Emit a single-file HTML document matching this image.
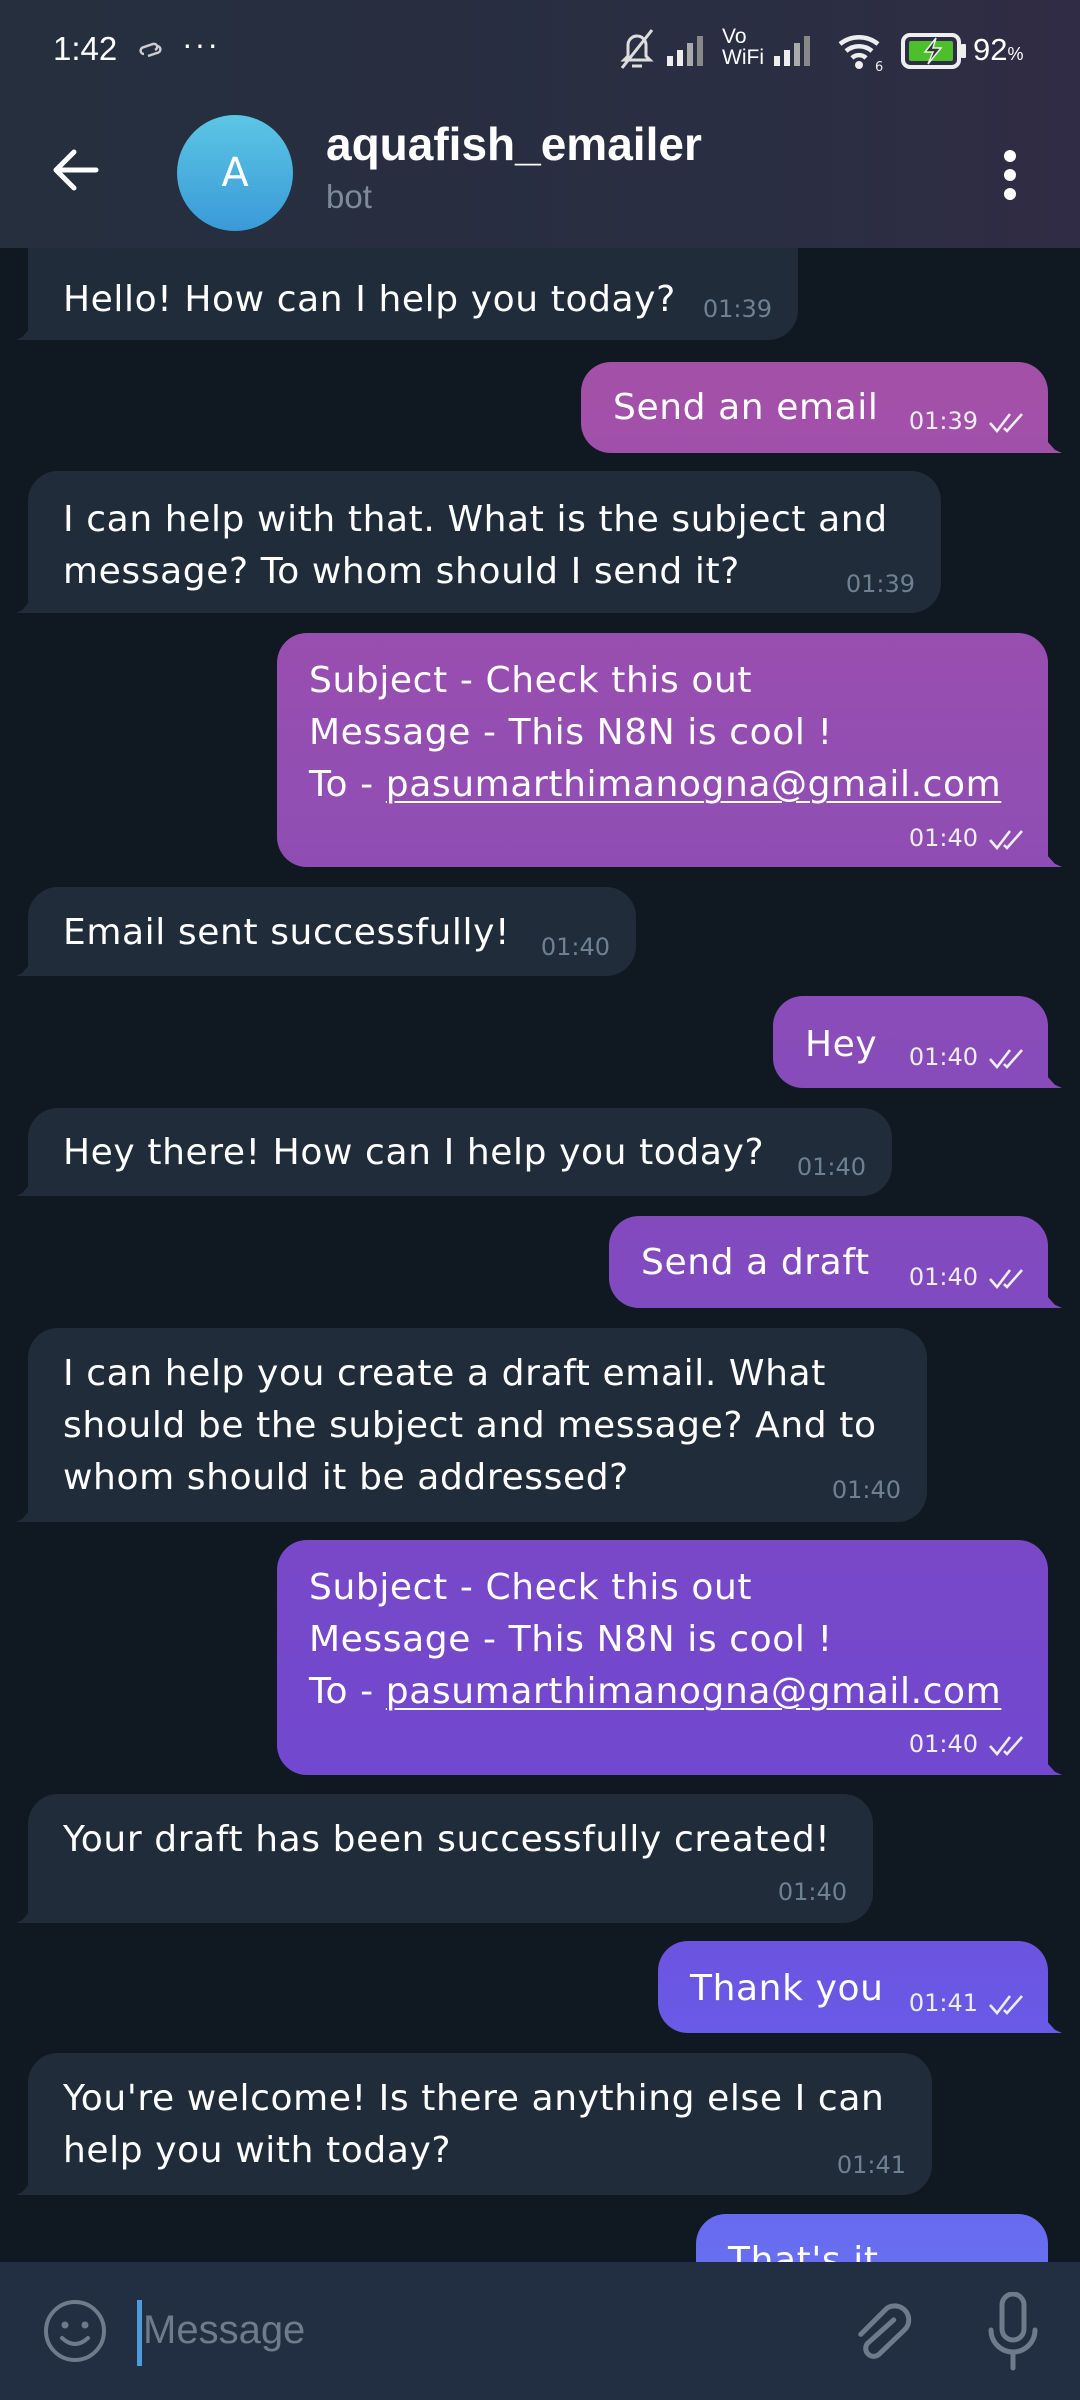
<!DOCTYPE html>
<html><head><meta charset="utf-8"><style>
*{margin:0;padding:0;box-sizing:border-box}
body{width:1080px;height:2400px;overflow:hidden;background:#101922;font-family:"DejaVu Sans","Liberation Sans",sans-serif;position:relative;color:#fff}
.hdr{position:absolute;left:0;top:0;width:1080px;height:248px;background:linear-gradient(90deg,#252f3e,#2a2e42 70%,#302c45);z-index:2}
.b{position:absolute;border-radius:30px}
.in{background:#212c3a;border-bottom-left-radius:8px}
.in::after{content:"";position:absolute;left:-12px;bottom:0;width:22px;height:22px;background:#212c3a;clip-path:polygon(100% 0,100% 100%,0 100%,30% 85%)}
.out{background:linear-gradient(180deg,#a651a8 0px,#a350a9 400px,#8d4db5 900px,#7a48c6 1500px,#7048d0 1800px,#685cea 2050px,#6872f2 2300px);background-attachment:fixed;border-bottom-right-radius:8px}
.out::after{content:"";position:absolute;right:-14px;bottom:0;width:24px;height:22px;background:inherit;background-attachment:fixed;clip-path:polygon(0 0,0 100%,100% 100%,70% 85%)}
.t{position:absolute;font-size:36px;line-height:52px;white-space:nowrap;letter-spacing:0.6px;margin-top:3px}
.ts{position:absolute;font-size:24px;line-height:30px;white-space:nowrap}
.in .ts{color:#6e8193}
.out .ts{color:#eee}
.ck{display:inline-block;margin-left:10px;vertical-align:middle}
u{text-decoration:underline;text-decoration-thickness:2px;text-underline-offset:5px}
.bar{position:absolute;left:0;top:2262px;width:1080px;height:138px;background:#222e41}
.sb{position:absolute;font-family:"Liberation Sans",sans-serif}
</style></head><body>

<div class="hdr">
 <div class="sb" style="left:53px;top:30px;font-size:33px">1:42</div>
 <svg style="position:absolute;left:136px;top:38px" width="30" height="24" viewBox="0 0 30 24"><path d="M8 16c-4 0-5-6 0-7l9-3c4-1 6 4 2 6M21 8c4 0 5 6 0 7l-9 3" fill="none" stroke="#ccc" stroke-width="2.5"/></svg>
 <div class="sb" style="left:182px;top:26px;font-size:32px;letter-spacing:2px">···</div>
 <svg style="position:absolute;left:616px;top:26px" width="40" height="46" viewBox="0 0 40 46"><path d="M8 34 l4-4 v-11 a9 9 0 0 1 18 0 v11 l4 4 z M16 40h10 M6 42 L36 4" fill="none" stroke="#ddd" stroke-width="3"/></svg>
 <svg style="position:absolute;left:667px;top:34px" width="48" height="34" viewBox="0 0 48 34"><rect x="0" y="22" width="6" height="10" fill="#eee"/><rect x="10" y="16" width="6" height="16" fill="#eee"/><rect x="20" y="9" width="6" height="23" fill="#aaa"/><rect x="30" y="2" width="6" height="30" fill="#888"/></svg>
 <div class="sb" style="left:722px;top:26px;font-size:21px;line-height:21px">Vo<br>WiFi</div>
 <svg style="position:absolute;left:774px;top:34px" width="48" height="34" viewBox="0 0 48 34"><rect x="0" y="22" width="6" height="10" fill="#eee"/><rect x="10" y="16" width="6" height="16" fill="#eee"/><rect x="20" y="9" width="6" height="23" fill="#aaa"/><rect x="30" y="2" width="6" height="30" fill="#888"/></svg>
 <svg style="position:absolute;left:835px;top:30px" width="50" height="42" viewBox="0 0 50 42"><path d="M43 14a30 30 0 0 0-38 0M37 21a20 20 0 0 0-26 0M31 28a10 10 0 0 0-14 0" fill="none" stroke="#eee" stroke-width="4.5"/><circle cx="24" cy="35" r="4" fill="#eee"/><text x="40" y="41" font-size="13" fill="#eee">6</text></svg>
 <svg style="position:absolute;left:900px;top:32px" width="70" height="38" viewBox="0 0 70 38"><rect x="3" y="3" width="56" height="32" rx="7" fill="none" stroke="#eee" stroke-width="4"/><rect x="9" y="9" width="44" height="20" rx="2" fill="#4cc02a"/><rect x="61" y="12" width="5" height="14" rx="1" fill="#eee"/><path d="M36 6 l-11 14 h8 l-5 12 l13-16 h-8z" fill="#2a3a2a" stroke="#eee" stroke-width="1.5"/></svg>
 <div class="sb" style="left:973px;top:32px;font-size:31px">92<span style="font-size:18px">%</span></div>
 <svg style="position:absolute;left:50px;top:148px" width="50" height="44" viewBox="0 0 50 44"><path d="M46 22H6M24 4L6 22l18 18" fill="none" stroke="#fff" stroke-width="5" stroke-linecap="round" stroke-linejoin="round"/></svg>
 <div style="position:absolute;left:177px;top:115px;width:116px;height:116px;border-radius:50%;background:linear-gradient(180deg,#5bc6e4,#3a9ad8);text-align:center;line-height:116px;font-size:40px">A</div>
 <div class="sb" style="left:326px;top:117px;font-size:46px;font-weight:bold">aquafish_emailer</div>
 <div class="sb" style="left:326px;top:178px;font-size:33px;color:#7d8b99">bot</div>
 <div style="position:absolute;left:1004px;top:150px;width:12px;height:12px;border-radius:50%;background:#fff;box-shadow:0 19px 0 #fff,0 38px 0 #fff"></div>
</div>

<div class="b in" style="left:28px;top:232px;width:770px;height:108px;border-top-left-radius:0;border-top-right-radius:0"><div class="t" style="left:35px;top:39px">Hello! How can I help you today?</div><div class="ts" style="right:26px;top:62px">01:39</div></div>

<div class="b out" style="left:581px;top:362px;width:467px;height:91px"><div class="t" style="left:32px;top:17px">Send an email</div><div class="ts" style="right:20px;top:44px">01:39<svg class="ck" width="40" height="22" viewBox="0 0 40 22"><path d="M2 12l7 8L22 3M16 17l3 3L34 3" fill="none" stroke="#eee" stroke-width="2.6"/></svg></div></div>

<div class="b in" style="left:28px;top:471px;width:913px;height:142px"><div class="t" style="left:35px;top:20px">I can help with that. What is the subject and</div><div class="t" style="left:35px;top:72px">message? To whom should I send it?</div><div class="ts" style="right:26px;top:98px">01:39</div></div>

<div class="b out" style="left:277px;top:633px;width:771px;height:234px"><div class="t" style="left:32px;top:19px">Subject - Check this out</div><div class="t" style="left:32px;top:71px">Message - This N8N is cool !</div><div class="t" style="left:32px;top:123px">To - <u>pasumarthimanogna@gmail.com</u></div><div class="ts" style="right:20px;top:190px">01:40<svg class="ck" width="40" height="22" viewBox="0 0 40 22"><path d="M2 12l7 8L22 3M16 17l3 3L34 3" fill="none" stroke="#eee" stroke-width="2.6"/></svg></div></div>

<div class="b in" style="left:28px;top:887px;width:608px;height:89px"><div class="t" style="left:35px;top:17px">Email sent successfully!</div><div class="ts" style="right:26px;top:45px">01:40</div></div>

<div class="b out" style="left:773px;top:996px;width:275px;height:92px"><div class="t" style="left:32px;top:20px">Hey</div><div class="ts" style="right:20px;top:46px">01:40<svg class="ck" width="40" height="22" viewBox="0 0 40 22"><path d="M2 12l7 8L22 3M16 17l3 3L34 3" fill="none" stroke="#eee" stroke-width="2.6"/></svg></div></div>

<div class="b in" style="left:28px;top:1108px;width:864px;height:88px"><div class="t" style="left:35px;top:16px">Hey there! How can I help you today?</div><div class="ts" style="right:26px;top:44px">01:40</div></div>

<div class="b out" style="left:609px;top:1216px;width:439px;height:92px"><div class="t" style="left:32px;top:18px">Send a draft</div><div class="ts" style="right:20px;top:46px">01:40<svg class="ck" width="40" height="22" viewBox="0 0 40 22"><path d="M2 12l7 8L22 3M16 17l3 3L34 3" fill="none" stroke="#eee" stroke-width="2.6"/></svg></div></div>

<div class="b in" style="left:28px;top:1328px;width:899px;height:194px"><div class="t" style="left:35px;top:17px">I can help you create a draft email. What</div><div class="t" style="left:35px;top:69px">should be the subject and message? And to</div><div class="t" style="left:35px;top:121px">whom should it be addressed?</div><div class="ts" style="right:26px;top:147px">01:40</div></div>

<div class="b out" style="left:277px;top:1540px;width:771px;height:235px"><div class="t" style="left:32px;top:19px">Subject - Check this out</div><div class="t" style="left:32px;top:71px">Message - This N8N is cool !</div><div class="t" style="left:32px;top:123px">To - <u>pasumarthimanogna@gmail.com</u></div><div class="ts" style="right:20px;top:189px">01:40<svg class="ck" width="40" height="22" viewBox="0 0 40 22"><path d="M2 12l7 8L22 3M16 17l3 3L34 3" fill="none" stroke="#eee" stroke-width="2.6"/></svg></div></div>

<div class="b in" style="left:28px;top:1794px;width:845px;height:129px"><div class="t" style="left:35px;top:17px">Your draft has been successfully created!</div><div class="ts" style="right:26px;top:83px">01:40</div></div>

<div class="b out" style="left:658px;top:1941px;width:390px;height:92px"><div class="t" style="left:32px;top:19px">Thank you</div><div class="ts" style="right:20px;top:47px">01:41<svg class="ck" width="40" height="22" viewBox="0 0 40 22"><path d="M2 12l7 8L22 3M16 17l3 3L34 3" fill="none" stroke="#eee" stroke-width="2.6"/></svg></div></div>

<div class="b in" style="left:28px;top:2053px;width:904px;height:142px"><div class="t" style="left:35px;top:17px">You're welcome! Is there anything else I can</div><div class="t" style="left:35px;top:69px">help you with today?</div><div class="ts" style="right:26px;top:97px">01:41</div></div>

<div class="b out" style="left:696px;top:2214px;width:352px;height:120px;border-bottom-right-radius:30px"><div class="t" style="left:32px;top:18px">That's it</div></div>

<div class="bar">
 <svg style="position:absolute;left:42px;top:36px" width="66" height="66" viewBox="0 0 66 66"><circle cx="33" cy="33" r="29" fill="none" stroke="#6d7b8c" stroke-width="4"/><circle cx="23" cy="27" r="3.5" fill="#6d7b8c"/><circle cx="43" cy="27" r="3.5" fill="#6d7b8c"/><path d="M20 40q13 12 26 0" fill="none" stroke="#6d7b8c" stroke-width="4" stroke-linecap="round"/></svg>
 <div style="position:absolute;left:137px;top:38px;width:5px;height:66px;background:#4c9ce0"></div>
 <div class="sb" style="left:143px;top:46px;font-size:40px;color:#6d7b8c">Message</div>
 <svg style="position:absolute;left:852px;top:34px" width="60" height="72" viewBox="0 0 60 72"><path d="M40 22L18 50a8 8 0 0 0 13 9l22-30a14 14 0 0 0-22-17L10 42" fill="none" stroke="#6d7b8c" stroke-width="5" stroke-linecap="round" transform="rotate(10 30 33)"/></svg>
 <svg style="position:absolute;left:985px;top:30px" width="56" height="80" viewBox="0 0 56 80"><rect x="17" y="2" width="22" height="46" rx="11" fill="none" stroke="#6d7b8c" stroke-width="5"/><path d="M6 38a22 22 0 0 0 44 0M28 60v16" fill="none" stroke="#6d7b8c" stroke-width="5" stroke-linecap="round"/></svg>
</div>
</body></html>
